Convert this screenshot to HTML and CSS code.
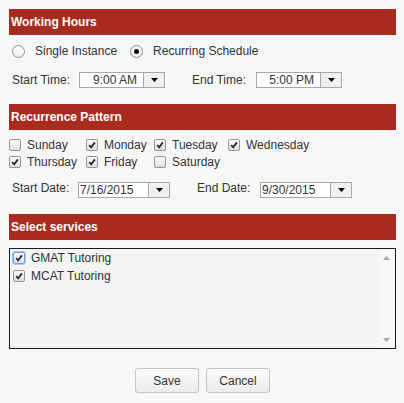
FILE: index.html
```html
<!DOCTYPE html>
<html>
<head>
<meta charset="utf-8">
<title>Schedule</title>
<link rel="stylesheet" href="styles.css">
</head>
<body>
<div class="page">
  <div class="section-head">Working Hours</div>
  <div class="radio-row">
    <label class="opt"><span class="radio"></span><span>Single Instance</span></label>
    <label class="opt"><span class="radio on"></span><span>Recurring Schedule</span></label>
  </div>
  <div class="field-row time-row">
    <span class="lbl lbl-start-time">Start Time:</span>
    <span class="combo time"><span class="val">9:00 AM</span><span class="btn"><svg width="7" height="4" viewBox="0 0 7 4"><polygon points="0,0 7,0 3.5,4" fill="#000"/></svg></span></span>
    <span class="lbl lbl-end-time">End Time:</span>
    <span class="combo time"><span class="val">5:00 PM</span><span class="btn"><svg width="7" height="4" viewBox="0 0 7 4"><polygon points="0,0 7,0 3.5,4" fill="#000"/></svg></span></span>
  </div>

  <div class="section-head sh2">Recurrence Pattern</div>
  <div class="days">
    <label class="day"><span class="cb"></span>Sunday</label>
    <label class="day"><span class="cb"><svg viewBox="0 0 10 10"><path d="M2.2 5.2 L4.2 7.3 L7.9 2.4" /></svg></span>Monday</label>
    <label class="day"><span class="cb"><svg viewBox="0 0 10 10"><path d="M2.2 5.2 L4.2 7.3 L7.9 2.4" /></svg></span>Tuesday</label>
    <label class="day"><span class="cb"><svg viewBox="0 0 10 10"><path d="M2.2 5.2 L4.2 7.3 L7.9 2.4" /></svg></span>Wednesday</label>
    <label class="day"><span class="cb"><svg viewBox="0 0 10 10"><path d="M2.2 5.2 L4.2 7.3 L7.9 2.4" /></svg></span>Thursday</label>
    <label class="day"><span class="cb"><svg viewBox="0 0 10 10"><path d="M2.2 5.2 L4.2 7.3 L7.9 2.4" /></svg></span>Friday</label>
    <label class="day"><span class="cb"></span>Saturday</label>
  </div>
  <div class="field-row date-row">
    <span class="lbl lbl-start-date">Start Date:</span>
    <span class="combo date"><span class="val">7/16/2015</span><span class="btn"><svg width="7" height="4" viewBox="0 0 7 4"><polygon points="0,0 7,0 3.5,4" fill="#000"/></svg></span></span>
    <span class="lbl lbl-end-date">End Date:</span>
    <span class="combo date"><span class="val">9/30/2015</span><span class="btn"><svg width="7" height="4" viewBox="0 0 7 4"><polygon points="0,0 7,0 3.5,4" fill="#000"/></svg></span></span>
  </div>

  <div class="section-head sh3">Select services</div>
  <div class="services">
    <div class="svc-list">
      <label class="svc"><span class="cb focus"><svg viewBox="0 0 10 10"><path d="M2.2 5.2 L4.2 7.3 L7.9 2.4" /></svg></span>GMAT Tutoring</label>
      <label class="svc"><span class="cb"><svg viewBox="0 0 10 10"><path d="M2.2 5.2 L4.2 7.3 L7.9 2.4" /></svg></span>MCAT Tutoring</label>
    </div>
    <div class="scrollbar">
      <svg width="7" height="4" viewBox="0 0 7 4"><polygon points="0,4 7,4 3.5,0" fill="#a6a6a6"/></svg>
      <svg width="7" height="4" viewBox="0 0 7 4"><polygon points="0,0 7,0 3.5,4" fill="#a6a6a6"/></svg>
    </div>
  </div>

  <div class="actions">
    <button class="btn-action">Save</button>
    <button class="btn-action">Cancel</button>
  </div>
</div>
</body>
</html>
```

FILE: styles.css
```css
* { box-sizing: border-box; }
html, body { margin: 0; background: #f7f7f7; }
body {
  font-family: "Liberation Sans", Arial, sans-serif;
  font-size: 12px;
  color: #333;
}
.page { padding: 9px 8px 0 9px; }

.section-head {
  height: 26px;
  line-height: 26px;
  background: #a92b20;
  color: #fff;
  font-weight: bold;
  padding-left: 2px;
}
.sh2 { margin-top: 16px; }
.sh3 { margin-top: 16px; }

/* radios */
.radio-row {
  display: flex;
  align-items: center;
  height: 16px;
  margin-top: 8px;
  padding-left: 3px;
}
.opt { display: flex; align-items: center; }
.opt + .opt { margin-left: 13px; }
.radio {
  width: 13px;
  height: 13px;
  border: 1px solid #8e8e8e;
  border-radius: 50%;
  background: linear-gradient(#ffffff, #ececec);
  margin-right: 10px;
  display: flex;
  align-items: center;
  justify-content: center;
}
.radio.on::after {
  content: "";
  width: 5px;
  height: 5px;
  border-radius: 50%;
  background: #111;
}

/* field rows */
.field-row { display: flex; padding-left: 3px; }
.time-row { margin-top: 13px; align-items: center; height: 16px; }
.date-row { margin-top: 12px; align-items: flex-start; }
.date-row .lbl { line-height: 12px; }
.lbl-start-time { width: 67px; }
.lbl-end-time { width: 64px; margin-left: 27px; }
.lbl-start-date { width: 66px; }
.lbl-end-date { width: 63px; margin-left: 27px; }

.combo {
  display: flex;
  height: 16px;
  border: 1px solid #a8a8a8;
  background: #fff;
}
.combo.time { width: 86px; }
.combo.date { width: 92px; }
.combo .val {
  flex: 1;
  line-height: 14px;
  white-space: nowrap;
}
.combo.time .val { text-align: right; padding-right: 6px; }
.combo.date .val { text-align: left; padding-left: 1px; }
.combo .btn {
  width: 21px;
  border-left: 1px solid #a8a8a8;
  background: #f0f0f0;
  display: flex;
  align-items: center;
  justify-content: center;
  padding-left: 1px;
}

/* checkboxes */
.days {
  display: grid;
  grid-template-columns: 77px 68px 74px auto;
  margin-top: 6px;
}
.day { display: flex; align-items: center; height: 17px; }
.cb {
  width: 12px;
  height: 12px;
  flex: none;
  border: 1px solid #959595;
  border-radius: 2px;
  background: linear-gradient(#fdfdfd, #dedede);
  margin-right: 6px;
  display: flex;
}
.cb svg { width: 10px; height: 10px; }
.cb path { fill: none; stroke: #2e2e2e; stroke-width: 1.9; }
.cb.focus { border-color: #6f9fdc; box-shadow: 0 0 0 1px #a9c8ef; }

/* services */
.services {
  display: flex;
  height: 101px;
  margin-top: 8px;
  border: 1px solid #1d1d1d;
  background: #f4f4f4;
}
.svc-list { flex: 1; padding-left: 3px; }
.svc { display: flex; align-items: center; height: 18px; }
.scrollbar {
  width: 17px;
  display: flex;
  flex-direction: column;
  justify-content: space-between;
  align-items: center;
  padding: 7px 0 6px;
  background: #f7f7f7;
}

/* buttons */
.actions {
  display: flex;
  justify-content: center;
  gap: 7px;
  margin-top: 19px;
}
.btn-action {
  width: 64px;
  height: 25px;
  border: 1px solid #c4c4c4;
  border-radius: 3px;
  background: linear-gradient(#fbfbfb, #ebebeb);
  font-family: "Liberation Sans", Arial, sans-serif;
  font-size: 12px;
  color: #333;
  padding: 0;
}
```
